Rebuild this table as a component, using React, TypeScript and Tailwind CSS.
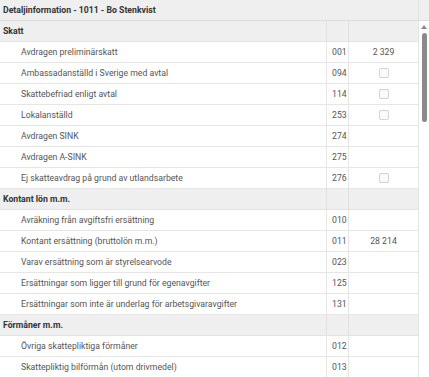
import React from 'react';

type Row =
  | { kind: 'section'; label: string }
  | { kind: 'item'; label: string; code: string; value?: string; check?: boolean };

const rows: Row[] = [
  { kind: 'section', label: 'Skatt' },
  { kind: 'item', label: 'Avdragen preliminärskatt', code: '001', value: '2 329' },
  { kind: 'item', label: 'Ambassadanställd i Sverige med avtal', code: '094', check: true },
  { kind: 'item', label: 'Skattebefriad enligt avtal', code: '114', check: true },
  { kind: 'item', label: 'Lokalanställd', code: '253', check: true },
  { kind: 'item', label: 'Avdragen SINK', code: '274' },
  { kind: 'item', label: 'Avdragen A-SINK', code: '275' },
  { kind: 'item', label: 'Ej skatteavdrag på grund av utlandsarbete', code: '276', check: true },
  { kind: 'section', label: 'Kontant lön m.m.' },
  { kind: 'item', label: 'Avräkning från avgiftsfri ersättning', code: '010' },
  { kind: 'item', label: 'Kontant ersättning (bruttolön m.m.)', code: '011', value: '28 214' },
  { kind: 'item', label: 'Varav ersättning som är styrelsearvode', code: '023' },
  { kind: 'item', label: 'Ersättningar som ligger till grund för egenavgifter', code: '125' },
  { kind: 'item', label: 'Ersättningar som inte är underlag för arbetsgivaravgifter', code: '131' },
  { kind: 'section', label: 'Förmåner m.m.' },
  { kind: 'item', label: 'Övriga skattepliktiga förmåner', code: '012' },
  { kind: 'item', label: 'Skattepliktig bilförmån (utom drivmedel)', code: '013' },
];

const App = () => {
  return (
    <div className="w-[429px] h-[377px] overflow-hidden bg-white font-['Roboto',sans-serif] text-[8.7px] leading-none">
      {/* title bar */}
      <div className="flex h-[21px] bg-[#efefef] border-b border-[#dcdcdc]">
        <div className="w-[419px] border-r border-[#e2e2e2] flex items-center pl-[3px] font-bold text-[#333]">
          Detaljinformation - 1011 - Bo Stenkvist
        </div>
        <div className="flex-1" />
      </div>

      <div className="flex">
        <div className="w-[419px] grid grid-cols-[327px_22px_70px]">
          {rows.map((row, i) =>
            row.kind === 'section' ? (
              <React.Fragment key={i}>
                <div className="h-[21px] bg-[#efefef] border-b border-r border-[#e2e2e2] flex items-center pl-[3px] font-bold text-[#333]">
                  {row.label}
                </div>
                <div className="h-[21px] bg-[#efefef] border-b border-r border-[#e2e2e2]" />
                <div className="h-[21px] bg-[#efefef] border-b border-r border-[#e2e2e2]" />
              </React.Fragment>
            ) : (
              <React.Fragment key={i}>
                <div className="h-[21px] border-b border-r border-[#e6e6e6] flex items-center pl-[21px] text-[#555] whitespace-nowrap overflow-hidden">
                  {row.label}
                </div>
                <div className="h-[21px] border-b border-r border-[#e6e6e6] flex items-center pl-[5px] text-[#555]">
                  {row.code}
                </div>
                <div className="h-[21px] border-b border-r border-[#e6e6e6] flex items-center justify-center text-[#555]">
                  {row.value}
                  {row.check && (
                    <span className="w-[10px] h-[10px] rounded-[2px] border border-[#d4d4d4] bg-[#fafafa]" />
                  )}
                </div>
              </React.Fragment>
            )
          )}
        </div>

        {/* scrollbar */}
        <div className="flex-1 flex flex-col items-center pt-[4px]">
          <div className="w-0 h-0 border-l-[3px] border-r-[3px] border-b-[4px] border-l-transparent border-r-transparent border-b-[#8a8a8a]" />
          <div className="mt-[4px] w-[5px] h-[89px] rounded-full bg-[#8a8a8a]" />
        </div>
      </div>
    </div>
  );
};

export default App;
